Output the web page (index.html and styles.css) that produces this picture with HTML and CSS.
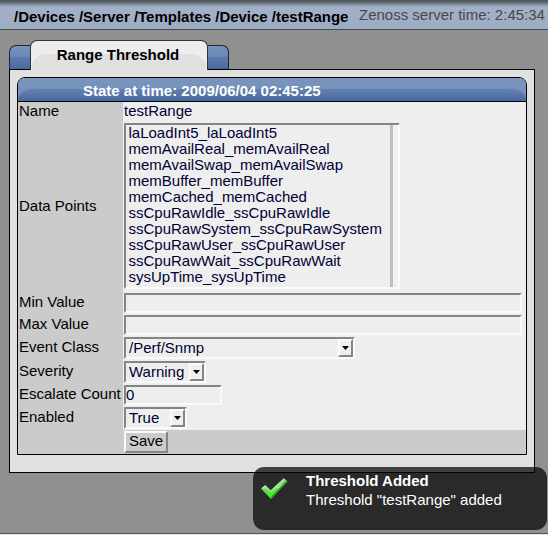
FILE: index.html
```html
<!DOCTYPE html>
<html lang="en">
<head>
<meta charset="utf-8">
<title>Range Threshold</title>
<link rel="stylesheet" href="styles.css">
</head>
<body>
<header class="topbar">
  <nav class="crumbs">/Devices /Server /Templates /Device /testRange</nav>
  <span class="clock">Zenoss server time: 2:45:34</span>
</header>
<main class="content">
  <div class="tabs">
    <span class="tab-end tab-left"></span>
    <span class="tab"><span class="tab-label">Range Threshold</span></span>
    <span class="tab-end tab-right"></span>
  </div>
  <section class="panel">
    <form class="card">
      <h1 class="card-title"><span>State at time: 2009/06/04 02:45:25</span></h1>
      <div class="grid">
        <label>Name</label><div class="value plain">testRange</div>
        <label>Data Points</label>
        <div class="value">
          <div class="field list">
            <ul>
              <li>laLoadInt5_laLoadInt5</li>
              <li>memAvailReal_memAvailReal</li>
              <li>memAvailSwap_memAvailSwap</li>
              <li>memBuffer_memBuffer</li>
              <li>memCached_memCached</li>
              <li>ssCpuRawIdle_ssCpuRawIdle</li>
              <li>ssCpuRawSystem_ssCpuRawSystem</li>
              <li>ssCpuRawUser_ssCpuRawUser</li>
              <li>ssCpuRawWait_ssCpuRawWait</li>
              <li>sysUpTime_sysUpTime</li>
            </ul>
            <span class="scroll"></span>
          </div>
        </div>
        <label>Min Value</label><div class="value"><div class="field wide"></div></div>
        <label>Max Value</label><div class="value"><div class="field wide"></div></div>
        <label>Event Class</label><div class="value"><div class="field select event">/Perf/Snmp<span class="drop"><svg viewBox="0 0 7 4"><path d="M0 0h7L3.5 4z"/></svg></span></div></div>
        <label>Severity</label><div class="value"><div class="field select severity">Warning<span class="drop"><svg viewBox="0 0 7 4"><path d="M0 0h7L3.5 4z"/></svg></span></div></div>
        <label>Escalate Count</label><div class="value"><div class="field count">0</div></div>
        <label>Enabled</label><div class="value"><div class="field select enabled">True<span class="drop"><svg viewBox="0 0 7 4"><path d="M0 0h7L3.5 4z"/></svg></span></div></div>
        <label></label><div class="value actions"><button type="button">Save</button></div>
      </div>
    </form>
  </section>
</main>
<div class="footer"></div>
<aside class="toast">
  <svg class="check" viewBox="0 0 28 23">
    <defs><linearGradient id="g" x1="0" y1="0" x2="0" y2="1"><stop offset="0" stop-color="#8fce88"/><stop offset=".45" stop-color="#9ae08c"/><stop offset=".6" stop-color="#5fe04a"/><stop offset="1" stop-color="#3cf020"/></linearGradient></defs>
    <path d="M1 11.5 5.2 8 10.7 13.2 24 1 27.3 4.6 11 22z" fill="url(#g)" stroke="#2c8a26" stroke-width=".6"/>
    <path d="M2 11.6 5.2 9 10.7 14.4 23.8 2.2" fill="none" stroke="#d4f2cd" stroke-width="1"/>
    <path d="M11.5 20.5 26.4 4.6" fill="none" stroke="#1d9a15" stroke-width="1.3"/>
  </svg>
  <div class="message"><strong>Threshold Added</strong><span>Threshold "testRange" added</span></div>
</aside>
</body>
</html>
```

FILE: styles.css
```css
* { box-sizing: border-box; }
body {
  margin: 0;
  width: 548px;
  height: 535px;
  overflow: hidden;
  display: flex;
  flex-direction: column;
  background: #909090;
  color: #000;
  font: 15px/16px "Liberation Sans", Arial, sans-serif;
  white-space: nowrap;
}
.topbar {
  height: 30px;
  flex: none;
  display: flex;
  padding-left: 14px;
  border-bottom: 1px solid #444a50;
  background: linear-gradient(#4c4e52, #67707c 3px, #99a7bb 6px, #a2b1c8 8px, #9dacc2);
}
.crumbs { width: 345px; padding-top: 9px; font-weight: bold; letter-spacing: -.01px; }
.clock { padding-top: 7px; color: #484848; }
.content { flex: 1; padding: 10px 13px 0 9px; }
.tabs { height: 29px; display: flex; align-items: flex-end; }
.tab-end {
  width: 22px;
  height: 24px;
  border: 1px solid #1c2430;
  border-bottom: 0;
  background: linear-gradient(#7893bc, #6b89b7 45%, #5c7bad 50%, #4a6a9f);
}
.tab-left { border-radius: 7px 0 0 0; }
.tab-right { border-radius: 0 7px 0 0; }
.tab {
  position: relative;
  z-index: 1;
  width: 178px;
  height: 30px;
  margin: 0 -1px -1px;
  padding: 6px 2px 0 0;
  border: 1px solid #333;
  border-bottom: 0;
  border-radius: 7px 7px 0 0;
  background: #ededed;
  text-align: center;
  font-weight: bold;
}
.tab::before {
  content: "";
  position: absolute;
  inset: 13px 1px 0;
  border-radius: 14px 14px 0 0 / 13px 13px 0 0;
  background: #e0e0e0;
}
.tab-label { position: relative; }
.panel {
  width: 526px;
  height: 404px;
  padding: 7px;
  border: 1px solid #000;
  background: #e0e0e0;
}
.card {
  width: 510px;
  height: 378px;
  border: 1px solid #000;
  border-radius: 8px 8px 0 0;
  overflow: hidden;
}
.card-title {
  position: relative;
  height: 24px;
  margin: 0;
  padding: 4px 0 0 65px;
  border-bottom: 1px solid #000;
  background: linear-gradient(#7b95bd, #6f8cb7);
  color: #fff;
  font: bold 15px/17px "Liberation Sans", Arial, sans-serif;
}
.card-title::before {
  content: "";
  position: absolute;
  inset: 11px 0 0;
  border-radius: 16px 16px 0 0 / 11px 11px 0 0;
  background: linear-gradient(#6281b1, #47689e);
}
.card-title span { position: relative; }
.grid {
  display: grid;
  grid-template-columns: 105px 403px;
  grid-template-rows: 20px 170px 22px 22px 24px 24px 22px 24px 24px;
}
label {
  display: flex;
  align-items: center;
  padding: 0 0 2px 1px;
  background: #cbcbcb;
}
.value { padding: 1px; background: #eee; color: #003; }
.plain { padding: 1px; }
.field {
  border: 2px solid;
  border-color: #858585 #fafafa #fafafa #858585;
  background: #eee;
}
.list { width: 276px; height: 166px; display: flex; justify-content: space-between; }
ul { margin: 0; padding: 0 0 0 2.5px; list-style: none; }
.scroll { width: 8px; height: 162px; border-left: 3px solid #bdc0c0; background: #f1f1f1; }
.wide { width: 398px; height: 20px; }
.select { height: 22px; display: flex; justify-content: space-between; padding-left: 3px; line-height: 17px; }
.event { width: 231px; }
.severity { width: 82px; }
.enabled { width: 63px; }
.drop {
  width: 15px;
  height: 18px;
  display: flex;
  align-items: center;
  justify-content: center;
  border: 2px solid;
  border-color: #fafafa #858585 #858585 #fafafa;
}
.drop svg { width: 7px; height: 4px; }
.count { width: 98px; height: 20px; }
.actions { background: #cbcbcb; }
button {
  width: 44px;
  height: 22px;
  padding: 0 0 2px;
  border: 2px solid;
  border-color: #fafafa #858585 #858585 #fafafa;
  background: #cbcbcb;
  color: #000;
  font: 15px/16px "Liberation Sans", Arial, sans-serif;
}
.footer { height: 2px; flex: none; border-top: 1px solid #555; background: #e5e5e5; }
.toast {
  position: absolute;
  z-index: 2;
  left: 253px;
  top: 467px;
  width: 294px;
  height: 63px;
  display: flex;
  padding: 6px 0 0 7px;
  border-radius: 11px;
  background: rgba(0, 0, 0, .71);
  color: #fff;
}
.check { width: 28px; height: 23px; margin-top: 4px; }
.message { display: flex; flex-direction: column; gap: 3px; margin-left: 18px; }
```
